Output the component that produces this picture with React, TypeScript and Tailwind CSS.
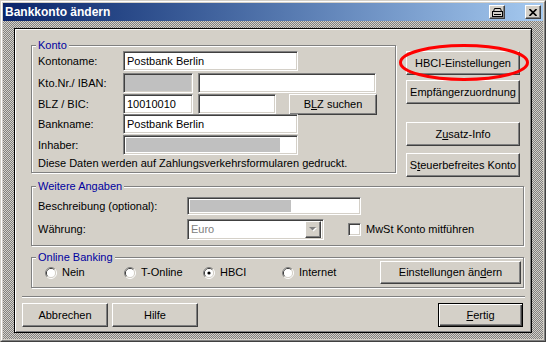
import React from "react";

// classic 3D looks
const raised =
  "flex items-center justify-center bg-[#d4d0c8] border border-t-white border-l-white border-r-[#404040] border-b-[#404040] shadow-[inset_-1px_-1px_0_#808080,inset_1px_1px_0_#d4d0c8]";
const sunken =
  "border border-t-[#808080] border-l-[#808080] border-r-white border-b-white shadow-[inset_1px_1px_0_#404040,inset_-1px_-1px_0_#d4d0c8]";
const group =
  "border border-[#808080] shadow-[inset_1px_1px_0_#fff,1px_1px_0_#fff] p-0 min-w-0";
const legend = "ml-[4px] px-[2px] leading-[13px] bg-[#d4d0c8] text-[#0000a0]";

const Radio = ({ checked = false }: { checked?: boolean }) => (
  <svg width="12" height="12" viewBox="0 0 12 12" className="shrink-0">
    <path d="M2.11 9.89 A5.5 5.5 0 0 1 9.89 2.11" stroke="#808080" fill="none" />
    <path d="M9.89 2.11 A5.5 5.5 0 0 1 2.11 9.89" stroke="#fff" fill="none" />
    <path d="M2.82 9.18 A4.5 4.5 0 0 1 9.18 2.82" stroke="#404040" fill="none" />
    <path d="M9.18 2.82 A4.5 4.5 0 0 1 2.82 9.18" stroke="#d4d0c8" fill="none" />
    <circle cx="6" cy="6" r="4" fill="#fff" />
    {checked && <circle cx="6" cy="6" r="1.6" fill="#000" />}
  </svg>
);

const RadioItem = ({ label, checked }: { label: string; checked?: boolean }) => (
  <div className="w-[79px] flex items-center gap-[5px]">
    <Radio checked={checked} />
    <span>{label}</span>
  </div>
);

const Field = ({
  w,
  text,
  gray,
  className = "",
}: {
  w: string;
  text?: string;
  gray?: boolean;
  className?: string;
}) => (
  <div
    className={`${sunken} ${w} h-[20px] flex items-center pl-[3px] ${
      gray ? "bg-[#c0c0c0]" : "bg-white"
    } ${className}`}
  >
    {text}
  </div>
);

export default function App() {
  return (
    <div className="relative w-[546px] h-[342px] overflow-hidden bg-[#d4d0c8] font-['Liberation_Sans',Arial,sans-serif] text-[11px] text-black">
      <div className="h-full border border-t-[#d4d0c8] border-l-[#d4d0c8] border-r-[#404040] border-b-[#404040]">
        <div className="h-full border border-t-white border-l-white border-r-[#808080] border-b-[#808080] p-px flex flex-col">
          {/* Title bar */}
          <div className="h-[18px] flex items-center bg-linear-to-r from-[#0a246a] to-[#a6caf0] pl-[2px] pr-[2px]">
            <span className="font-bold text-white text-[12px] leading-none">Bankkonto ändern</span>
            <div className={`${raised} ml-auto w-[16px] h-[14px]`}>
              <svg width="11" height="9" viewBox="0 0 11 9">
                <path d="M2.5 0.5 H8.5 L9.5 3.5 H1.5 Z" stroke="#000" fill="none" />
                <rect x="0.5" y="3.5" width="10" height="5" stroke="#000" fill="none" />
                <path d="M2 6.5 H9" stroke="#000" />
              </svg>
            </div>
            <div className={`${raised} ml-[20px] w-[16px] h-[14px]`}>
              <svg width="8" height="7" viewBox="0 0 8 7">
                <path d="M0.5 0 L7.5 7 M7.5 0 L0.5 7" stroke="#000" strokeWidth="1.6" />
              </svg>
            </div>
          </div>

          {/* Hatched frame */}
          <div className="flex-1 pt-[7px] pl-[11px] pr-[11px] pb-[6px] bg-[image:repeating-conic-gradient(#808080_0_25%,#d4d0c8_0_50%)] bg-[length:2px_2px]">
            <div className="w-[518px] h-[305px] border border-black bg-[#d4d0c8] shadow-[inset_1px_1px_0_#fff,inset_-1px_-1px_0_#808080] flex flex-col">
              {/* Top: Konto + buttons */}
              <div className="flex pl-[16px] pt-[10px]">
                <fieldset className={`${group} w-[365px] h-[134px]`}>
                  <legend className={legend}>Konto</legend>
                  <div className="pl-[6px] -mt-px flex flex-col">
                    <div className="flex items-center h-[20px]">
                      <span className="w-[85px]">Kontoname:</span>
                      <Field w="w-[175px]" text="Postbank Berlin" />
                    </div>
                    <div className="flex items-center h-[20px] mt-[2px]">
                      <span className="w-[85px]">Kto.Nr./ IBAN:</span>
                      <Field w="w-[70px]" gray />
                      <Field w="w-[178px]" className="ml-[5px]" />
                    </div>
                    <div className="flex items-center h-[20px] mt-[1px]">
                      <span className="w-[85px]">BLZ / BIC:</span>
                      <Field w="w-[70px]" text="10010010" />
                      <Field w="w-[78px]" className="ml-[5px]" />
                      <div className={`${raised} ml-[13px] w-[88px] h-[21px]`}>
                        <span>
                          B<u>L</u>Z suchen
                        </span>
                      </div>
                    </div>
                    <div className="flex items-center h-[20px]">
                      <span className="w-[85px]">Bankname:</span>
                      <Field w="w-[175px]" text="Postbank Berlin" />
                    </div>
                    <div className="flex items-center h-[20px] mt-[1px]">
                      <span className="w-[85px]">Inhaber:</span>
                      <div className={`${sunken} w-[175px] h-[20px] bg-white p-[2px]`}>
                        <div className="w-[154px] h-full bg-[#c0c0c0]" />
                      </div>
                    </div>
                    <div className="mt-[2px] leading-[13px]">
                      Diese Daten werden auf Zahlungsverkehrsformularen gedruckt.
                    </div>
                  </div>
                </fieldset>

                <div className="ml-[10px] mt-[12px] flex flex-col w-[114px]">
                  <div className={`${raised} h-[24px]`}>HBCI-Einstellungen</div>
                  <div className={`${raised} h-[24px] mt-[5px]`}>Empfängerzuordnung</div>
                  <div className={`${raised} h-[24px] mt-[18px]`}>
                    <span>
                      Z<u>u</u>satz-Info
                    </span>
                  </div>
                  <div className={`${raised} h-[24px] mt-[7px]`}>
                    <span>
                      S<u>t</u>euerbefreites Konto
                    </span>
                  </div>
                </div>
              </div>

              {/* Weitere Angaben */}
              <fieldset className={`${group} ml-[16px] mt-[3px] w-[493px] h-[66px]`}>
                <legend className={legend}>Weitere Angaben</legend>
                <div className="pl-[6px] flex flex-col">
                  <div className="flex items-center mt-[4px] h-[18px]">
                    <span className="w-[149px]">Beschreibung (optional):</span>
                    <div className={`${sunken} w-[174px] h-[18px] bg-white p-[2px]`}>
                      <div className="w-[101px] h-full bg-[#c0c0c0]" />
                    </div>
                  </div>
                  <div className="flex items-center mt-[4px] h-[21px]">
                    <span className="w-[149px]">Währung:</span>
                    <div className={`${sunken} w-[137px] h-[21px] bg-white flex items-center pr-[2px]`}>
                      <span className="flex-1 pl-[3px] text-[#808080]">Euro</span>
                      <div className={`${raised} w-[16px] h-[17px]`}>
                        <svg width="8" height="5" viewBox="0 0 8 5">
                          <path d="M1 1 H8 L4.5 4.5 Z" fill="#fff" />
                          <path d="M0 0 H7 L3.5 3.5 Z" fill="#808080" />
                        </svg>
                      </div>
                    </div>
                    <div className={`${sunken} ml-[24px] w-[13px] h-[13px] bg-white`} />
                    <span className="ml-[5px]">MwSt Konto mitführen</span>
                  </div>
                </div>
              </fieldset>

              {/* Online Banking */}
              <fieldset className={`${group} ml-[16px] mt-[5px] w-[493px] h-[37px]`}>
                <legend className={legend}>Online Banking</legend>
                <div className="flex items-center -mt-[3px] h-[23px] pl-[13px] pr-[2px]">
                  <RadioItem label="Nein" />
                  <RadioItem label="T-Online" />
                  <RadioItem label="HBCI" checked />
                  <RadioItem label="Internet" />
                  <div className={`${raised} ml-auto w-[141px] h-[23px]`}>
                    <span>
                      Einstellungen än<u>d</u>ern
                    </span>
                  </div>
                </div>
              </fieldset>

              {/* Separator */}
              <div className="ml-[7px] mt-[8px] w-[503px] border-t border-t-[#808080] border-b border-b-white" />

              {/* Bottom buttons */}
              <div className="flex mt-[5px] px-[7px] pr-[8px]">
                <div className={`${raised} w-[86px] h-[24px]`}>Abbrechen</div>
                <div className={`${raised} w-[86px] h-[24px] ml-[4px]`}>Hilfe</div>
                <div className="ml-auto w-[85px] h-[24px] flex items-center justify-center bg-[#d4d0c8] border border-black shadow-[inset_1px_1px_0_#fff,inset_-1px_-1px_0_#404040,inset_-2px_-2px_0_#808080]">
                  <span>
                    <u>F</u>ertig
                  </span>
                </div>
              </div>
            </div>
          </div>
        </div>
      </div>

      {/* red annotation ellipse */}
      <svg
        className="absolute left-[399px] top-[44px] pointer-events-none"
        width="130"
        height="37"
        viewBox="0 0 130 37"
      >
        <ellipse cx="65" cy="18.5" rx="63.5" ry="17" stroke="#ff0000" strokeWidth="3" fill="none" />
      </svg>
    </div>
  );
}
